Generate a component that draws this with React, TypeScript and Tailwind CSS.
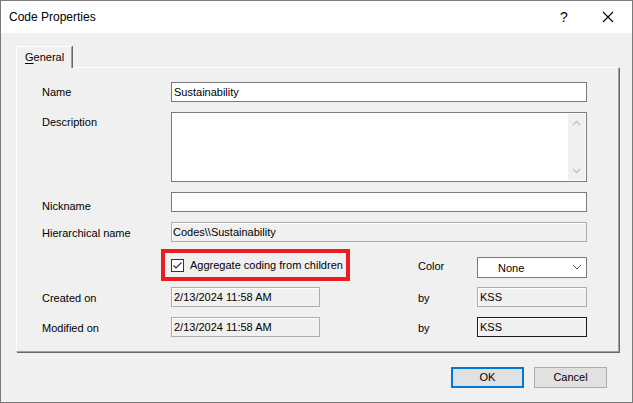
import React from "react";

function Label({ children, className = "" }: { children: React.ReactNode; className?: string }) {
  return <div className={`text-[11px] text-black leading-none ${className}`}>{children}</div>;
}

export default function App() {
  return (
    <div
      className="w-[633px] h-[403px] bg-[#f0f0f0] border border-[#7a7a7a] flex flex-col overflow-hidden"
      style={{ fontFamily: '"Liberation Sans", Arial, sans-serif' }}
    >
      {/* Title bar */}
      <div className="h-[32px] bg-white flex items-center shrink-0">
        <div className="pl-[8px] text-[12px] text-black flex-1">Code Properties</div>
        <div className="w-[44px] text-center text-[14px] text-black">?</div>
        <div className="w-[44px] mr-[2px] flex justify-center">
          <svg width="12" height="12" viewBox="0 0 12 12">
            <path d="M1 1 L11 11 M11 1 L1 11" stroke="#000" strokeWidth="1.1" fill="none" />
          </svg>
        </div>
      </div>

      {/* Body */}
      <div className="flex-1 flex flex-col pl-[15px] pr-[13px] pt-[13px]">
        {/* Tab strip */}
        <div className="flex h-[21px] relative z-10">
          <div className="w-[56px] h-[22px] bg-[#f0f0f0] border-t border-l border-white border-r border-r-[#a0a0a0] shadow-[1px_0_0_#696969] flex items-center pl-[8px] text-[11px] text-black">
            <span>
              <span className="underline underline-offset-2">G</span>eneral
            </span>
          </div>
        </div>
        {/* Panel */}
        <div className="w-[603px] h-[285px] border-t border-l border-white border-r border-b border-r-[#a0a0a0] border-b-[#a0a0a0] shadow-[1px_1px_0_#696969] flex flex-col pl-[25px] pt-[14px]">
          {/* Name */}
          <div className="flex items-center h-[20px]">
            <Label className="w-[129px]">Name</Label>
            <div className="w-[416px] h-[20px] bg-white border border-[#7a7a7a] flex items-center px-[2px] text-[11px]">
              Sustainability
            </div>
          </div>
          {/* Description */}
          <div className="flex mt-[10px] h-[70px]">
            <Label className="w-[129px] pt-[5px]">Description</Label>
            <div className="w-[416px] h-[70px] bg-white border border-[#7a7a7a] flex justify-end p-[1px]">
              <div className="w-[17px] h-full bg-[#f0f0f0] flex flex-col items-center justify-between py-[6px]">
                <svg width="9" height="6" viewBox="0 0 9 6">
                  <path d="M1 5 L4.5 1.5 L8 5" stroke="#c0c0c0" strokeWidth="1.3" fill="none" />
                </svg>
                <svg width="9" height="6" viewBox="0 0 9 6">
                  <path d="M1 1 L4.5 4.5 L8 1" stroke="#c0c0c0" strokeWidth="1.3" fill="none" />
                </svg>
              </div>
            </div>
          </div>
          {/* Nickname */}
          <div className="flex items-center h-[20px] mt-[10px]">
            <Label className="w-[129px] pt-[8px]">Nickname</Label>
            <div className="w-[416px] h-[20px] bg-white border border-[#7a7a7a]" />
          </div>
          {/* Hierarchical name */}
          <div className="flex items-center h-[20px] mt-[10px]">
            <Label className="w-[129px] pt-[2px]">Hierarchical name</Label>
            <div className="w-[416px] h-[20px] bg-[#f0f0f0] border border-[#adadad] shadow-[inset_1px_1px_0_#fff] flex items-center px-[1px] text-[11px]">
              Codes\\Sustainability
            </div>
          </div>
          {/* Checkbox + color */}
          <div className="flex items-center h-[32px] mt-[7px]">
            <div className="w-[119px]" />
            <div className="w-[189px] h-[32px] border-[4px] border-[#ed1c24] flex items-center pl-[6px]">
              <div className="w-[13px] h-[13px] bg-white border border-[#333] flex items-center justify-center">
                <svg width="11" height="11" viewBox="0 0 11 11">
                  <path d="M1.5 5.5 L4 8 L9.5 2.5" stroke="#333" strokeWidth="1.2" fill="none" />
                </svg>
              </div>
              <span className="ml-[6px] text-[11px] text-black">Aggregate coding from children</span>
            </div>
            <Label className="w-[59px] ml-[68px] pt-[2px]">Color</Label>
            <div className="w-[110px] h-[21px] mt-[4px] bg-white border border-[#7a7a7a] flex items-center pl-[20px] pr-[4px] text-[11px]">
              <span className="flex-1 pt-[3px]">None</span>
              <svg width="10" height="6" viewBox="0 0 10 6">
                <path d="M1 1 L5 5 L9 1" stroke="#555" strokeWidth="1" fill="none" />
              </svg>
            </div>
          </div>
          {/* Created on */}
          <div className="flex items-center h-[20px] mt-[6px]">
            <Label className="w-[129px] pt-[2px]">Created on</Label>
            <div className="w-[149px] h-[20px] bg-[#f0f0f0] border border-[#adadad] shadow-[inset_1px_1px_0_#fff] flex items-center px-[2px] text-[11px]">
              2/13/2024 11:58 AM
            </div>
            <Label className="w-[59px] ml-[98px] pt-[2px]">by</Label>
            <div className="w-[110px] h-[20px] bg-[#f0f0f0] border border-[#adadad] shadow-[inset_1px_1px_0_#fff] flex items-center px-[2px] text-[11px]">
              KSS
            </div>
          </div>
          {/* Modified on */}
          <div className="flex items-center h-[20px] mt-[10px]">
            <Label className="w-[129px] pt-[2px]">Modified on</Label>
            <div className="w-[149px] h-[20px] bg-[#f0f0f0] border border-[#adadad] shadow-[inset_1px_1px_0_#fff] flex items-center px-[2px] text-[11px]">
              2/13/2024 11:58 AM
            </div>
            <Label className="w-[59px] ml-[98px] pt-[2px]">by</Label>
            <div className="w-[110px] h-[20px] bg-[#f0f0f0] border border-[#1a1a1a] shadow-[inset_1px_1px_0_#fff] flex items-center px-[2px] text-[11px]">
              KSS
            </div>
          </div>
        </div>

        {/* Buttons */}
        <div className="flex justify-end gap-[10px] mt-[15px] pr-[12px]">
          <button className="w-[73px] h-[21px] bg-[#e1e1e1] border-2 border-[#0078d7] text-[11px] text-black flex items-center justify-center">
            OK
          </button>
          <button className="w-[73px] h-[21px] bg-[#e1e1e1] border border-[#adadad] text-[11px] text-black flex items-center justify-center">
            Cancel
          </button>
        </div>
      </div>
    </div>
  );
}
